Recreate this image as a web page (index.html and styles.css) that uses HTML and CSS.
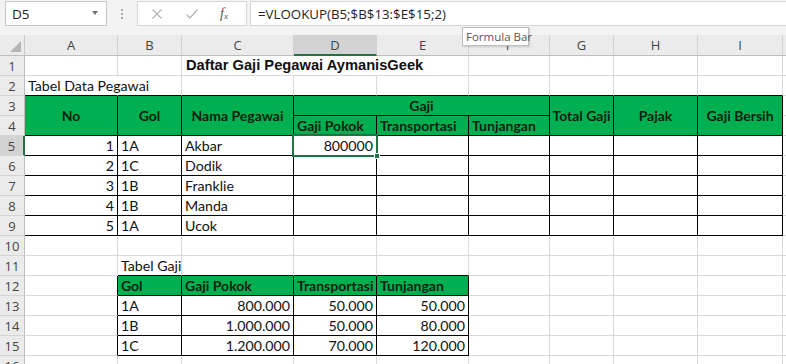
FILE: index.html
```html
<!DOCTYPE html>
<html>
<head>
<meta charset="utf-8">
<link rel="stylesheet" href="styles.css">
</head>
<body>
<div class="app">
  <div class="topbar">
    <div class="namebox"><span>D5</span><span class="caret"></span></div>
    <div class="dots"><i></i><i></i><i></i></div>
    <div class="fxbox">
      <svg width="12" height="12" viewBox="0 0 12 12" class="ico-x"><path d="M1.5 1.5 L10.5 10.5 M10.5 1.5 L1.5 10.5" stroke="#b4b4b4" stroke-width="1.3" fill="none"/></svg>
      <svg width="14" height="12" viewBox="0 0 14 12" class="ico-ok"><path d="M1.5 6.5 L5 10 L12.5 1.5" stroke="#b4b4b4" stroke-width="1.3" fill="none"/></svg>
      <span class="fx">f<sub>x</sub></span>
    </div>
    <div class="formula">=VLOOKUP(B5;$B$13:$E$15;2)</div>
  </div>
  <div class="tooltip">Formula Bar</div>
  <div class="sheet">
    <div class="corner"><span class="tri"></span></div>
    <div class="ch">A</div><div class="ch">B</div><div class="ch">C</div><div class="ch sel">D</div><div class="ch">E</div><div class="ch">F</div><div class="ch">G</div><div class="ch">H</div><div class="ch">I</div><div class="ch last"></div>

    <div class="rh">1</div>
    <div class="c"></div><div class="c"></div><div class="c nor"><span class="title">Daftar Gaji Pegawai AymanisGeek</span></div><div class="c nor"></div><div class="c"></div><div class="c"></div><div class="c"></div><div class="c"></div><div class="c"></div><div class="c j"></div>

    <div class="rh">2</div>
    <div class="c bb nor"><span class="ov">Tabel Data Pegawai</span></div><div class="c bb"></div><div class="c bb"></div><div class="c bb"></div><div class="c bb"></div><div class="c bb"></div><div class="c bb"></div><div class="c bb"></div><div class="c bb"></div><div class="c j"></div>

    <div class="rh">3</div>
    <div class="c b g hc r2">No</div><div class="c b g hc r2">Gol</div><div class="c b g hc r2">Nama Pegawai</div><div class="c b g hb c3">Gaji</div><div class="c b g hc r2">Total Gaji</div><div class="c b g hc r2">Pajak</div><div class="c b g hc r2">Gaji Bersih</div><div class="c j"></div>

    <div class="rh">4</div>
    <div class="c b g hl">Gaji Pokok</div><div class="c b g hl">Transportasi</div><div class="c b g hl">Tunjangan</div><div class="c j"></div>

    <div class="rh sel">5</div>
    <div class="c b num">1</div><div class="c b">1A</div><div class="c b">Akbar</div><div class="c b num active">800000<span class="selbox"><span class="handle"></span></span></div><div class="c b"></div><div class="c b"></div><div class="c b"></div><div class="c b"></div><div class="c b"></div><div class="c j"></div>

    <div class="rh">6</div>
    <div class="c b num">2</div><div class="c b">1C</div><div class="c b">Dodik</div><div class="c b"></div><div class="c b"></div><div class="c b"></div><div class="c b"></div><div class="c b"></div><div class="c b"></div><div class="c j"></div>

    <div class="rh">7</div>
    <div class="c b num">3</div><div class="c b">1B</div><div class="c b">Franklie</div><div class="c b"></div><div class="c b"></div><div class="c b"></div><div class="c b"></div><div class="c b"></div><div class="c b"></div><div class="c j"></div>

    <div class="rh">8</div>
    <div class="c b num">4</div><div class="c b">1B</div><div class="c b">Manda</div><div class="c b"></div><div class="c b"></div><div class="c b"></div><div class="c b"></div><div class="c b"></div><div class="c b"></div><div class="c j"></div>

    <div class="rh">9</div>
    <div class="c b num">5</div><div class="c b">1A</div><div class="c b">Ucok</div><div class="c b"></div><div class="c b"></div><div class="c b"></div><div class="c b"></div><div class="c b"></div><div class="c b"></div><div class="c j"></div>

    <div class="rh">10</div>
    <div class="c"></div><div class="c"></div><div class="c"></div><div class="c"></div><div class="c"></div><div class="c"></div><div class="c"></div><div class="c"></div><div class="c"></div><div class="c j"></div>

    <div class="rh">11</div>
    <div class="c"></div><div class="c bb">Tabel Gaji</div><div class="c bb"></div><div class="c bb"></div><div class="c bb"></div><div class="c"></div><div class="c"></div><div class="c"></div><div class="c"></div><div class="c j"></div>

    <div class="rh">12</div>
    <div class="c br"></div><div class="c b g hl">Gol</div><div class="c b g hl">Gaji Pokok</div><div class="c b g hl">Transportasi</div><div class="c b g hl">Tunjangan</div><div class="c"></div><div class="c"></div><div class="c"></div><div class="c"></div><div class="c j"></div>

    <div class="rh">13</div>
    <div class="c br"></div><div class="c b">1A</div><div class="c b num">800.000</div><div class="c b num">50.000</div><div class="c b num">50.000</div><div class="c"></div><div class="c"></div><div class="c"></div><div class="c"></div><div class="c j"></div>

    <div class="rh">14</div>
    <div class="c br"></div><div class="c b">1B</div><div class="c b num">1.000.000</div><div class="c b num">50.000</div><div class="c b num">80.000</div><div class="c"></div><div class="c"></div><div class="c"></div><div class="c"></div><div class="c j"></div>

    <div class="rh">15</div>
    <div class="c br"></div><div class="c b">1C</div><div class="c b num">1.200.000</div><div class="c b num">70.000</div><div class="c b num">120.000</div><div class="c"></div><div class="c"></div><div class="c"></div><div class="c"></div><div class="c j"></div>

    <div class="rh">16</div>
    <div class="c"></div><div class="c"></div><div class="c"></div><div class="c"></div><div class="c"></div><div class="c"></div><div class="c"></div><div class="c"></div><div class="c"></div><div class="c j"></div>
  </div>
</div>
</body>
</html>
```

FILE: styles.css
```css
* { box-sizing: border-box; }
html, body { margin: 0; padding: 0; }
body {
  width: 786px;
  height: 364px;
  overflow: hidden;
  background: #ffffff;
  font-family: Lato, "Noto Sans", sans-serif;
}
.app { position: relative; width: 786px; height: 364px; overflow: hidden; }

.topbar {
  height: 35px;
  background: #f3f3f3;
  display: flex;
  align-items: flex-start;
  padding-top: 1px;
  font-family: "Open Sans", "Noto Sans", sans-serif;
  color: #222;
}
.namebox {
  margin-left: 5px;
  width: 102px;
  height: 25px;
  background: #fff;
  border: 1px solid #c6c6c6;
  display: flex;
  align-items: center;
  justify-content: space-between;
  padding: 0 8px 0 6px;
  font-size: 13.5px;
}
.caret {
  width: 0; height: 0;
  border-left: 3.5px solid transparent;
  border-right: 3.5px solid transparent;
  border-top: 4px solid #6f6f6f;
  margin-top: -2px;
}
.dots {
  width: 30px;
  height: 25px;
  display: flex;
  flex-direction: column;
  align-items: center;
  justify-content: center;
  gap: 2px;
}
.dots i { display: block; width: 2px; height: 2px; background: #a8a8a8; }
.fxbox {
  width: 110px;
  height: 25px;
  background: #fff;
  border: 1px solid #d6d6d6;
  display: flex;
  align-items: center;
  padding-left: 13px;
}
.ico-x { margin-right: 22px; }
.ico-ok { margin-right: 21px; }
.fx {
  font-family: "Liberation Serif", serif;
  font-style: italic;
  font-size: 14px;
  color: #555;
  line-height: 1;
}
.fx sub { font-size: 9px; vertical-align: -1px; }
.formula {
  flex: 1;
  margin-left: 3px;
  height: 25px;
  background: #fff;
  border: 1px solid #d6d6d6;
  border-right: none;
  padding-left: 7px;
  display: flex;
  align-items: center;
  font-size: 13.3px;
  color: #1e1e1e;
}

.tooltip {
  position: absolute;
  left: 462px;
  top: 27px;
  width: 67px;
  height: 19px;
  background: #fff;
  border: 1px solid #bdbdbd;
  box-shadow: 1px 1px 2px rgba(0,0,0,0.15);
  font-family: "Open Sans", "Noto Sans", sans-serif;
  font-size: 11.5px;
  color: #555;
  line-height: 17px;
  padding-left: 3px;
  z-index: 5;
  white-space: nowrap;
}

.sheet {
  display: grid;
  grid-template-columns: 25px 93px 64px 112px 83px 92px 81px 64px 84px 85px 1fr;
  grid-template-rows: 21px repeat(16, 20px);
}
.corner, .ch, .rh {
  background: #ebebeb;
  border-right: 1px solid #c9c9c9;
  border-bottom: 1px solid #bdbdbd;
  font-family: "Open Sans", "Noto Sans", sans-serif;
  font-size: 13px;
  color: #444;
}
.corner { position: relative; }
.tri {
  position: absolute;
  right: 3px;
  bottom: 3px;
  width: 0; height: 0;
  border-left: 11px solid transparent;
  border-bottom: 11px solid #b5b5b5;
}
.ch {
  display: flex;
  align-items: center;
  justify-content: center;
  border-right-color: #d2d2d2;
}
.ch.sel { background: #d3d3d3; border-bottom: 2px solid #217346; }
.ch.last { border-right: none; }
.rh {
  display: flex;
  align-items: center;
  justify-content: center;
  border-bottom-color: #d4d4d4;
  border-right-color: #bdbdbd;
  font-size: 13px;
}
.rh.sel { background: #d3d3d3; border-right: 2px solid #217346; }

.c {
  border-right: 1px solid #d9d9d9;
  border-bottom: 1px solid #d9d9d9;
  font-size: 14.2px;
  line-height: 19px;
  color: #111;
  padding: 0 3px;
  display: flex;
  align-items: flex-end;
  white-space: nowrap;
  position: relative;
}
.c.j { border-right: none; }
.c.nor { border-right-color: transparent; }
.c.bb { border-bottom: 1px solid #000; }
.c.br { border-right: 1px solid #000; }
.c.b { border-right: 1px solid #000; border-bottom: 1px solid #000; }
.c.g { background: #00b050; font-weight: 700; color: #0d1f12; font-size: 14px; }
.c.hc { justify-content: center; align-items: center; }
.c.hb { justify-content: center; }
.c.hl { justify-content: flex-start; }
.c.r2 { grid-row: span 2; }
.c.c3 { grid-column: span 3; }
.c.num { justify-content: flex-end; }
.title {
  font-family: "Liberation Sans", Arial, sans-serif;
  font-weight: 700;
  font-size: 14.7px;
  padding-left: 1px;
  overflow: visible;
}
.ov { overflow: visible; }

.selbox {
  position: absolute;
  left: -2px;
  top: -2px;
  right: -2px;
  bottom: -2px;
  border: 2px solid #217346;
  z-index: 3;
}
.handle {
  position: absolute;
  right: -4px;
  bottom: -4px;
  width: 6px;
  height: 6px;
  background: #217346;
  border: 1px solid #fff;
}
```
